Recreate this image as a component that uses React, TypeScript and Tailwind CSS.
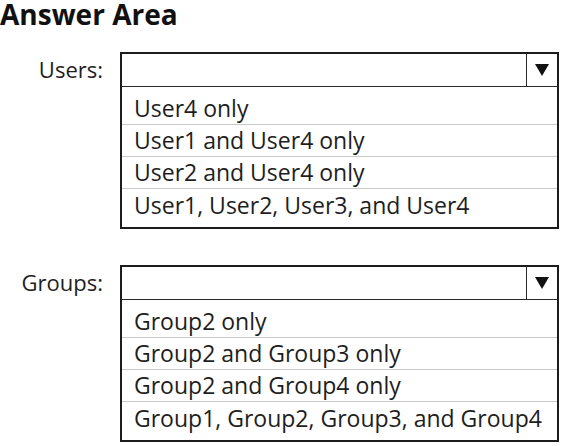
const questions = [
  {
    label: "Users:",
    options: [
      "User4 only",
      "User1 and User4 only",
      "User2 and User4 only",
      "User1, User2, User3, and User4",
    ],
  },
  {
    label: "Groups:",
    options: [
      "Group2 only",
      "Group2 and Group3 only",
      "Group2 and Group4 only",
      "Group1, Group2, Group3, and Group4",
    ],
  },
];

function Dropdown({ label, options }: { label: string; options: string[] }) {
  return (
    <div className="flex items-start">
      <div className="flex h-[35px] w-[103px] items-center justify-end text-[22px] text-[#1e1e1e]">
        {label}
      </div>
      <div className="ml-[17px] w-[439px] border-2 border-[#1c1c1c] bg-white">
        <div className="flex h-[33px] border-b border-[#2a2a2a]">
          <div className="flex-1" />
          <div className="flex w-[31px] items-center justify-center border-l border-[#2a2a2a]">
            <svg width="14" height="12" viewBox="0 0 14 12">
              <path d="M0 0 H14 L7 12 Z" fill="#111" />
            </svg>
          </div>
        </div>
        <div className="pt-[6px] pb-[6px]">
          {options.map((opt, i) => (
            <div
              key={opt}
              className={
                "flex h-[32px] items-center pl-[12px] text-[23px] text-[#1e1e1e] " +
                (i < options.length - 1 ? "border-b border-[#c9c9c9]" : "")
              }
            >
              {opt}
            </div>
          ))}
        </div>
      </div>
    </div>
  );
}

export default function App() {
  return (
    <div
      className="h-[446px] w-[565px] overflow-hidden bg-white"
      style={{ fontFamily: '"Open Sans", "Noto Sans", sans-serif' }}
    >
      <h1 className="text-[28px] leading-[28px] font-bold text-[#111]">Answer Area</h1>
      <div className="mt-[24px] flex flex-col gap-[36px]">
        {questions.map((q) => (
          <Dropdown key={q.label} label={q.label} options={q.options} />
        ))}
      </div>
    </div>
  );
}
